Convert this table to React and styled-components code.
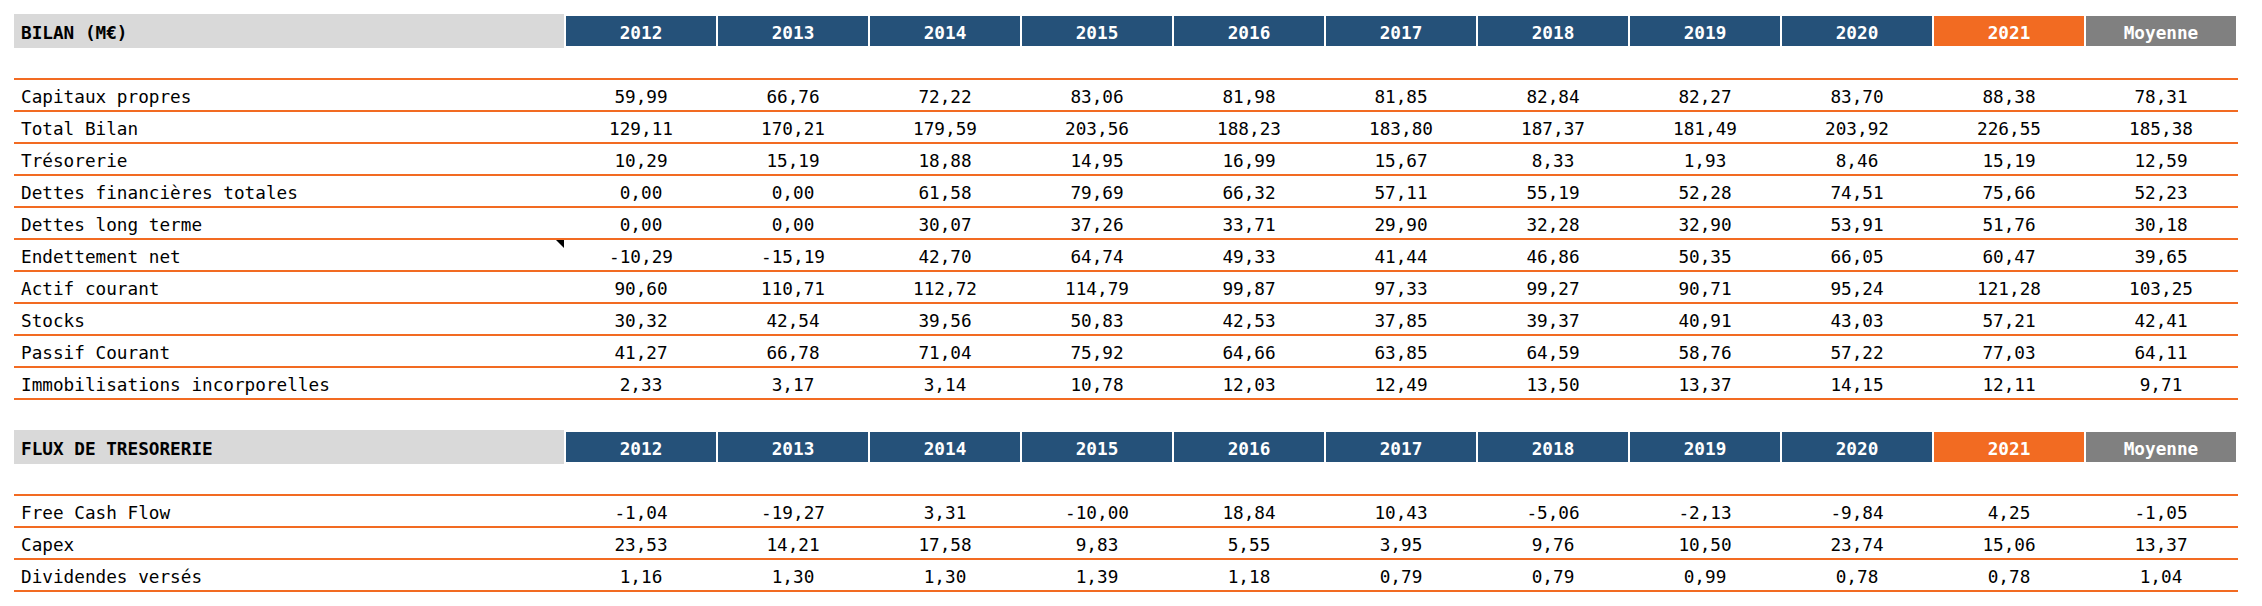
import React from 'react';
import styled, { createGlobalStyle } from 'styled-components';

const GlobalStyle = createGlobalStyle`
  html, body { margin: 0; padding: 0; background: #ffffff; }
  body {
    font-family: 'DejaVu Sans Mono', 'Liberation Mono', monospace;
    font-size: 17.7px;
    color: #000000;
  }
`;

const ORANGE = '#f26b22';

const Page = styled.div`
  display: flex;
  flex-direction: column;
  gap: 30px;
  padding: 14px 0 0 14px;
`;

const Section = styled.section`
  display: flex;
  flex-direction: column;
  width: 2224px;
`;

const grid = `
  display: grid;
  grid-template-columns: 552px repeat(11, 152px);
`;

const HeaderRow = styled.div`
  ${grid}
  height: 34px;
  align-items: center;
`;

const HeaderLabel = styled.div`
  width: 550px;
  height: 34px;
  background: #d9d9d9;
  display: flex;
  align-items: center;
  padding: 4px 0 0 7px;
  box-sizing: border-box;
  font-weight: bold;
`;

const headerColors = {
  year: '#255179',
  current: '#f26b22',
  avg: '#808080',
};

const HeaderCell = styled.div`
  width: 150px;
  height: 30px;
  background: ${(p) => headerColors[p.$variant]};
  color: #ffffff;
  font-weight: bold;
  display: flex;
  align-items: center;
  justify-content: center;
  padding-top: 3px;
  box-sizing: border-box;
`;

const Body = styled.div`
  margin-top: 30px;
  border-top: 2px solid ${ORANGE};
`;

const Row = styled.div`
  ${grid}
  height: 32px;
  box-sizing: border-box;
  border-bottom: 2px solid ${ORANGE};
  align-items: center;
`;

const Label = styled.div`
  position: relative;
  height: 30px;
  display: flex;
  align-items: center;
  padding: 3px 0 0 7px;
  box-sizing: border-box;
  white-space: nowrap;
`;

const CommentMark = styled.span`
  position: absolute;
  top: 0;
  right: 2px;
  width: 0;
  height: 0;
  border-top: 8px solid #000000;
  border-left: 8px solid transparent;
`;

const Value = styled.div`
  height: 30px;
  display: flex;
  align-items: center;
  justify-content: center;
  padding: 3px 2px 0 0;
  box-sizing: border-box;
  white-space: nowrap;
`;

const years = ['2012', '2013', '2014', '2015', '2016', '2017', '2018', '2019', '2020'];

const sections = [
  {
    title: 'BILAN (M€)',
    rows: [
      ['Capitaux propres', '59,99 66,76 72,22 83,06 81,98 81,85 82,84 82,27 83,70 88,38 78,31'],
      ['Total Bilan', '129,11 170,21 179,59 203,56 188,23 183,80 187,37 181,49 203,92 226,55 185,38'],
      ['Trésorerie', '10,29 15,19 18,88 14,95 16,99 15,67 8,33 1,93 8,46 15,19 12,59'],
      ['Dettes financières totales', '0,00 0,00 61,58 79,69 66,32 57,11 55,19 52,28 74,51 75,66 52,23'],
      ['Dettes long terme', '0,00 0,00 30,07 37,26 33,71 29,90 32,28 32,90 53,91 51,76 30,18'],
      ['Endettement net', '-10,29 -15,19 42,70 64,74 49,33 41,44 46,86 50,35 66,05 60,47 39,65', true],
      ['Actif courant', '90,60 110,71 112,72 114,79 99,87 97,33 99,27 90,71 95,24 121,28 103,25'],
      ['Stocks', '30,32 42,54 39,56 50,83 42,53 37,85 39,37 40,91 43,03 57,21 42,41'],
      ['Passif Courant', '41,27 66,78 71,04 75,92 64,66 63,85 64,59 58,76 57,22 77,03 64,11'],
      ['Immobilisations incorporelles', '2,33 3,17 3,14 10,78 12,03 12,49 13,50 13,37 14,15 12,11 9,71'],
    ],
  },
  {
    title: 'FLUX DE TRESORERIE',
    rows: [
      ['Free Cash Flow', '-1,04 -19,27 3,31 -10,00 18,84 10,43 -5,06 -2,13 -9,84 4,25 -1,05'],
      ['Capex', '23,53 14,21 17,58 9,83 5,55 3,95 9,76 10,50 23,74 15,06 13,37'],
      ['Dividendes versés', '1,16 1,30 1,30 1,39 1,18 0,79 0,79 0,99 0,78 0,78 1,04'],
    ],
  },
];

function Table({ title, rows }) {
  return (
    <Section>
      <HeaderRow>
        <HeaderLabel>{title}</HeaderLabel>
        {years.map((y) => (
          <HeaderCell key={y} $variant="year">{y}</HeaderCell>
        ))}
        <HeaderCell $variant="current">2021</HeaderCell>
        <HeaderCell $variant="avg">Moyenne</HeaderCell>
      </HeaderRow>
      <Body>
        {rows.map(([label, values, comment]) => (
          <Row key={label}>
            <Label>
              {label}
              {comment && <CommentMark />}
            </Label>
            {values.split(' ').map((v, i) => (
              <Value key={i}>{v}</Value>
            ))}
          </Row>
        ))}
      </Body>
    </Section>
  );
}

export default function App() {
  return (
    <>
      <GlobalStyle />
      <Page>
        {sections.map((s) => (
          <Table key={s.title} title={s.title} rows={s.rows} />
        ))}
      </Page>
    </>
  );
}
